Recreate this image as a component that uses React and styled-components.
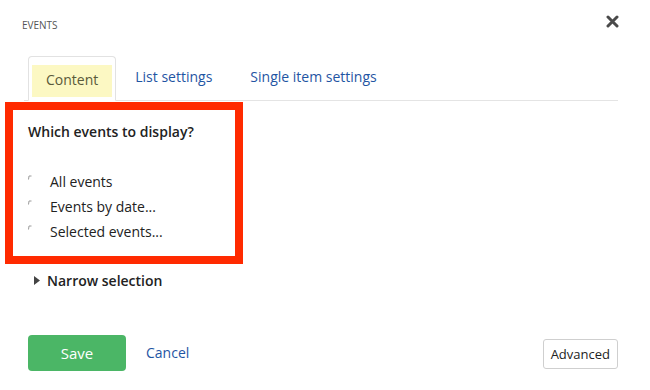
import React from 'react'
import styled, { createGlobalStyle } from 'styled-components'

const GlobalStyle = createGlobalStyle`
  html, body {
    margin: 0;
    padding: 0;
    background: #fff;
  }
  body {
    font-family: "Open Sans", "Liberation Sans", sans-serif;
    color: #222;
  }
`

const Dialog = styled.div`
  width: 650px;
  height: 390px;
  box-sizing: border-box;
  display: flex;
  flex-direction: column;
`

const Header = styled.div`
  display: flex;
  justify-content: space-between;
  align-items: center;
  height: 22px;
  margin-top: 10px;
  padding: 0 31px 0 22px;
`

const Title = styled.div`
  font-size: 10px;
  text-transform: uppercase;
  color: #555;
  margin-top: 8px;
`

const Close = styled.button`
  border: 0;
  background: none;
  padding: 0;
  width: 13px;
  height: 13px;
  display: flex;
  cursor: pointer;
`

const Tabs = styled.div`
  display: flex;
  align-items: stretch;
  margin: 24px 32px 0 24px;
  padding-left: 4px;
  height: 44px;
  border-bottom: 1px solid #e4e4e4;
`

const Tab = styled.div`
  display: flex;
  align-items: center;
  padding: 0 ${p => (p.$active ? '3px' : '18px')} ${p => (p.$active ? '0' : '3px')};
  margin-bottom: ${p => (p.$active ? '-1px' : '0')};
  border: 1px solid ${p => (p.$active ? '#e2e2e2' : 'transparent')};
  border-bottom-color: ${p => (p.$active ? '#fff' : 'transparent')};
  border-radius: 4px 4px 0 0;
  background: ${p => (p.$active ? '#fff' : 'transparent')};
  font-size: 14px;
  color: ${p => (p.$active ? '#5a5a3a' : '#1f55a3')};
  cursor: pointer;
`

const TabHighlight = styled.span`
  display: flex;
  align-items: center;
  height: 32px;
  box-sizing: border-box;
  margin-top: 4px;
  padding: 0 14px 3px;
  background: #fcf8c3;
`

const Highlighted = styled.div`
  width: 238px;
  height: 162px;
  box-sizing: border-box;
  margin: 1px 0 0 5px;
  border: 8px solid #ff2a00;
  padding: 12px 0 0 15px;
`

const Question = styled.div`
  font-size: 14px;
  font-weight: 600;
  color: #222;
  margin-bottom: 30px;
`

const Options = styled.div`
  display: flex;
  flex-direction: column;
  gap: 5px;
`

const Option = styled.label`
  display: flex;
  align-items: center;
  height: 20px;
  font-size: 14px;
  color: #222;
`

const RadioMark = styled.span`
  width: 22px;
  display: flex;
  align-items: flex-start;
  height: 12px;
`

const Narrow = styled.div`
  display: flex;
  align-items: center;
  gap: 7px;
  margin: 6px 0 0 34px;
  height: 20px;
  font-size: 14px;
  font-weight: 600;
  color: #222;
`

const Footer = styled.div`
  display: flex;
  align-items: flex-end;
  margin: 45px 32px 0 28px;
`

const SaveButton = styled.button`
  width: 98px;
  height: 36px;
  border: 0;
  border-radius: 4px;
  background: #4bb666;
  color: #fff;
  font-family: inherit;
  font-size: 15px;
  cursor: pointer;
`

const CancelLink = styled.a`
  margin: 0 0 9px 20px;
  font-size: 14px;
  color: #1f55a3;
  cursor: pointer;
`

const AdvancedButton = styled.button`
  margin-left: auto;
  margin-bottom: 2px;
  height: 30px;
  padding: 0 7px;
  border: 1px solid #cfcfcf;
  border-radius: 3px;
  background: #fff;
  font-family: inherit;
  font-size: 13px;
  color: #222;
  cursor: pointer;
`

const options = ['All events', 'Events by date...', 'Selected events...']

const Tick = () => (
  <svg width="4" height="5" viewBox="0 0 4 5">
    <path d="M0.5 4.5 L1 1 H3.5" stroke="#9a9a9a" strokeWidth="1" fill="none" />
  </svg>
)

const App = () => (
  <>
    <GlobalStyle />
    <Dialog>
      <Header>
        <Title>Events</Title>
        <Close aria-label="Close">
          <svg width="13" height="13" viewBox="0 0 13 13">
            <path d="M2 2 L11 11 M11 2 L2 11" stroke="#4a4a4a" strokeWidth="3" strokeLinecap="round" />
          </svg>
        </Close>
      </Header>
      <Tabs>
        <Tab $active><TabHighlight>Content</TabHighlight></Tab>
        <Tab>List settings</Tab>
        <Tab>Single item settings</Tab>
      </Tabs>
      <Highlighted>
        <Question>Which events to display?</Question>
        <Options>
          {options.map(o => (
            <Option key={o}>
              <RadioMark><Tick /></RadioMark>
              {o}
            </Option>
          ))}
        </Options>
      </Highlighted>
      <Narrow>
        <svg width="6" height="9" viewBox="0 0 6 9">
          <path d="M0 0 L6 4.5 L0 9 Z" fill="#444" />
        </svg>
        Narrow selection
      </Narrow>
      <Footer>
        <SaveButton>Save</SaveButton>
        <CancelLink>Cancel</CancelLink>
        <AdvancedButton>Advanced</AdvancedButton>
      </Footer>
    </Dialog>
  </>
)

export default App
